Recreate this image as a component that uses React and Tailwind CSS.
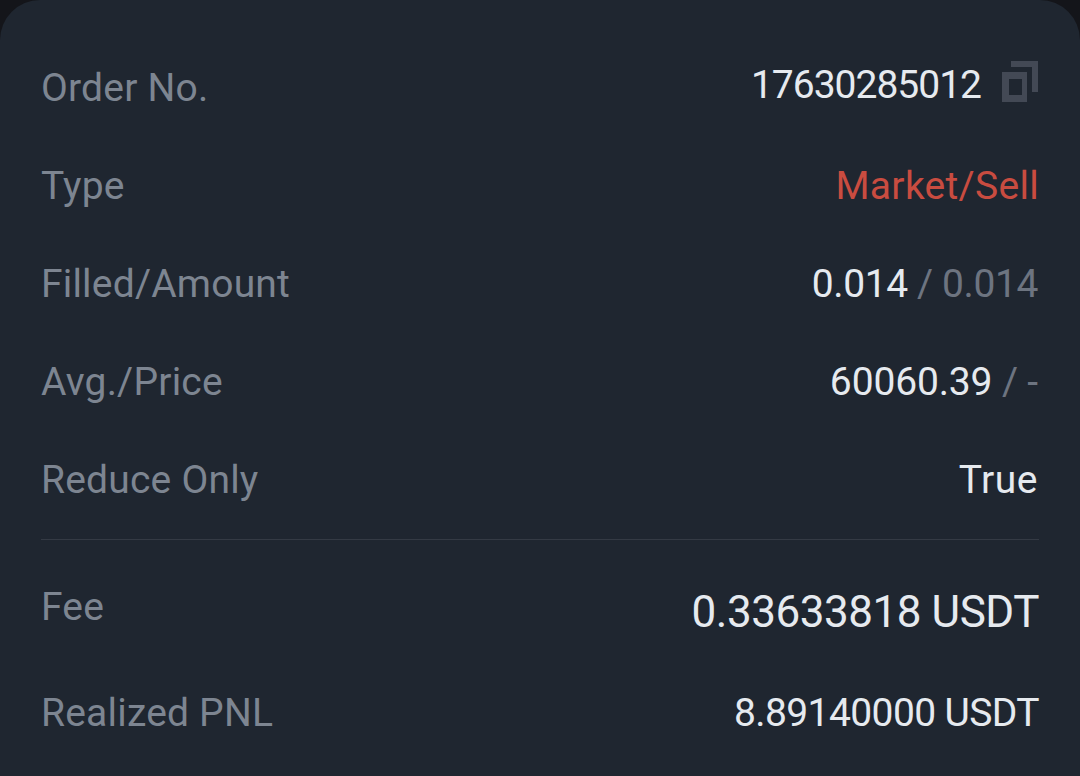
import React from "react";

const label = "text-[39px] leading-[44px] text-[#7d8591] tracking-[0.2px]";
const value = "text-[39px] leading-[44px] text-[#e6eaef]";
const muted = "text-[#6d7480]";

function Row({ name, children }) {
  return (
    <div className="h-[98px] flex items-center justify-between">
      <span className={label}>{name}</span>
      {children}
    </div>
  );
}

function CopyIcon() {
  return (
    <svg width="36" height="42" viewBox="0 0 36 42" fill="none" className="ml-[21px] mr-[1px] -mt-[12px]">
      <path d="M0 11H25V41H0V11ZM7 18V34H20V18H7Z" fill="#434955" fillRule="evenodd" />
      <path d="M9 0H36V31H30V6H9V0Z" fill="#434955" />
    </svg>
  );
}

export default function App() {
  return (
    <div className="h-[776px] w-[1080px] overflow-hidden bg-[#14151a] font-['Roboto',sans-serif]">
      <div className="h-full rounded-t-[40px] bg-[#1f2630] pl-[41px] pr-[41px] pt-[39px]">
        <Row name="Order No.">
          <div className="flex items-center">
            <span className={value + " -mt-[6px] tracking-[-1px]"}>17630285012</span>
            <CopyIcon />
          </div>
        </Row>
        <Row name="Type">
          <span className="text-[39px] leading-[44px] text-[#c94c40] tracking-[0.3px]">Market/Sell</span>
        </Row>
        <Row name="Filled/Amount">
          <span className={value + " mr-[1px] tracking-[-0.4px]"}>
            0.014 <span className={muted}>/ 0.014</span>
          </span>
        </Row>
        <Row name="Avg./Price">
          <span className={value + " mr-[1px] tracking-[-0.15px]"}>
            60060.39 <span className={muted}>/ -</span>
          </span>
        </Row>
        <Row name="Reduce Only">
          <span className={value + " mr-[1px] tracking-[0.5px]"}>True</span>
        </Row>
        <div className="mt-[10px] h-px bg-[#343a44]" />
        <div className="mt-[22px] flex items-start justify-between">
          <span className={label + " mt-[23px]"}>Fee</span>
          <span className="mt-[25px] text-[44px] leading-[50px] text-[#e6eaef] tracking-[-0.45px]">0.33633818 USDT</span>
        </div>
        <div className="mt-[54px] flex items-center justify-between">
          <span className={label}>Realized PNL</span>
          <span className={value + " tracking-[-0.6px]"}>8.89140000 USDT</span>
        </div>
      </div>
    </div>
  );
}
